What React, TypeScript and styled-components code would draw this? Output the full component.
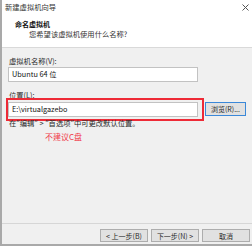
import React from "react";
import styled, { createGlobalStyle } from "styled-components";

const Global = createGlobalStyle`
  html, body { margin: 0; padding: 0; background: #ffffff; }
  body { font-family: "Noto Sans CJK SC", "Liberation Sans", sans-serif; }
`;

const Window = styled.div`
  width: 252px;
  height: 246px;
  box-sizing: border-box;
  border-left: 2px solid #a9a9a9;
  border-bottom: 2px solid #a9a9a9;
  display: flex;
  flex-direction: column;
  background: #f0f0f0;
  font-size: 7.3px;
  color: #2a2a2a;
  overflow: hidden;
`;

const Header = styled.div`
  background: #ffffff;
  height: 48px;
  box-sizing: border-box;
  border-bottom: 1px solid #d9d9d9;
  display: flex;
  flex-direction: column;
  padding-left: 3px;
`;

const TitleBar = styled.div`
  height: 14px;
  display: flex;
  align-items: center;
  justify-content: space-between;
  color: #333;
  padding-right: 3px;
`;

const HeadTitle = styled.div`
  margin-top: 5px;
  margin-left: 10px;
  font-weight: bold;
  font-size: 7px;
  color: #111;
  line-height: 10px;
`;

const HeadSub = styled.div`
  margin-left: 24px;
  line-height: 10px;
  color: #333;
`;

const Body = styled.div`
  flex: 1;
  padding: 8px 0 0 6px;
  display: flex;
  flex-direction: column;
`;

const Label = styled.div<{ $mt?: number }>`
  line-height: 10px;
  margin-top: ${(p) => p.$mt ?? 0}px;
  margin-left: 1px;
`;

const Input = styled.div`
  width: 190px;
  height: 15px;
  box-sizing: border-box;
  background: #fff;
  border: 1px solid #c2c2c2;
  display: flex;
  align-items: center;
  padding: 0 0 2px 3px;
  font-size: 7.3px;
  color: #111;
`;

const Row = styled.div<{ $mt?: number }>`
  display: flex;
  align-items: flex-start;
  margin-top: ${(p) => p.$mt ?? 0}px;
`;

const RedBox = styled.div`
  border: 2px solid #ee2a36;
  padding: 2px 4px 2px 0;
  margin-left: -2px;
  display: flex;
`;

const Button = styled.div<{ $w: number; $h: number; $focus?: boolean }>`
  width: ${(p) => p.$w}px;
  height: ${(p) => p.$h}px;
  box-sizing: border-box;
  background: #e1e1e1;
  border: 1px solid ${(p) => (p.$focus ? "#3b88d8" : "#adadad")};
  display: flex;
  align-items: center;
  justify-content: center;
  font-size: 7px;
  color: #2a2a2a;
  flex-shrink: 0;
`;

const BrowseButton = styled(Button)`
  margin: 4px 0 0 1px;
`;

const Hint = styled.div`
  line-height: 8px;
  margin: -2px 0 0 1px;
`;

const Warn = styled.div`
  color: #f0394a;
  font-size: 8px;
  line-height: 10px;
  margin-top: 5px;
  margin-left: 37px;
`;

const Footer = styled.div`
  height: 21px;
  box-sizing: border-box;
  border-top: 1px solid #d6d6d6;
  display: flex;
  align-items: flex-start;
  justify-content: flex-end;
  gap: 3px;
  padding: 5px 2px 0 0;
`;

const CloseIcon = () => (
  <svg width="7" height="7" viewBox="0 0 7 7">
    <path d="M0.5 0.5 L6.5 6.5 M6.5 0.5 L0.5 6.5" stroke="#555" strokeWidth="1" />
  </svg>
);

export default function App() {
  return (
    <>
      <Global />
      <Window>
        <Header>
          <TitleBar>
            <span>新建虚拟机向导</span>
            <CloseIcon />
          </TitleBar>
          <HeadTitle>命名虚拟机</HeadTitle>
          <HeadSub>您希望该虚拟机使用什么名称?</HeadSub>
        </Header>
        <Body>
          <Label>虚拟机名称(V):</Label>
          <Row $mt={1}>
            <Input>Ubuntu 64 位</Input>
          </Row>
          <Label $mt={8}>位置(L):</Label>
          <Row $mt={-2}>
            <RedBox>
              <Input>E:\virtualgazebo</Input>
            </RedBox>
            <BrowseButton $w={41} $h={14} $focus>浏览(R)...</BrowseButton>
          </Row>
          <Hint>在"编辑" &gt; "首选项"中可更改默认位置。</Hint>
          <Warn>不建议C盘</Warn>
        </Body>
        <Footer>
          <Button $w={48} $h={13}>&lt; 上一步(B)</Button>
          <Button $w={48} $h={13}>下一步(N) &gt;</Button>
          <Button $w={48} $h={13}>取消</Button>
        </Footer>
      </Window>
    </>
  );
}
